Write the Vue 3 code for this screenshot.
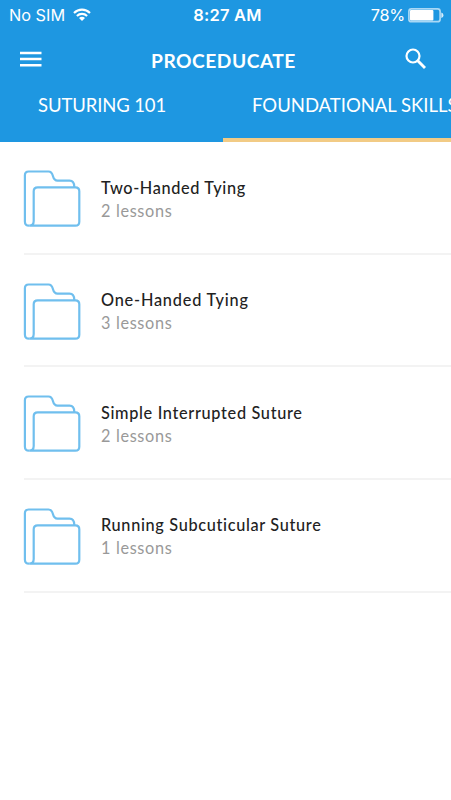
<script setup>
const lessons = [
  { title: 'Two-Handed Tying', count: 2, cls: 'two' },
  { title: 'One-Handed Tying', count: 3, cls: 'one' },
  { title: 'Simple Interrupted Suture', count: 2, cls: 'simple' },
  { title: 'Running Subcuticular Suture', count: 1, cls: 'running' },
]
</script>

<template>
  <div class="screen">
    <header class="header">
      <div class="status">
        <div class="carrier">
          <span>No SIM</span>
          <svg class="wifi" width="18" height="14" viewBox="0 0 18 14" fill="none" stroke="#fff" stroke-width="2.1">
            <path d="M1 5.1C5.6.5 12.4.5 17 5.1" />
            <path d="M3.9 8C6.8 5.1 11.2 5.1 14.1 8" />
            <path d="M6 10.1C7.7 8.4 10.3 8.4 12 10.1L9 13Z" fill="#fff" stroke="none" />
          </svg>
        </div>
        <div class="clock">8:27 AM</div>
        <div class="power">
          <span>78%</span>
          <svg width="36" height="15" viewBox="0 0 36 15">
            <rect x=".9" y=".9" width="31.2" height="12.8" rx="2.5" fill="none" stroke="#a9d8f5" stroke-width="1.7" />
            <rect x="2" y="2" width="23.4" height="10.6" rx="1" fill="#fff" />
            <path d="M33.3 4.5c2.8.8 2.8 4.8 0 5.6z" fill="#d5ecfa" />
          </svg>
        </div>
      </div>
      <div class="toolbar">
        <svg class="menu" width="22" height="16" viewBox="0 0 22 16" fill="#fff">
          <path d="M0 .7h21.5v2.5H0zM0 6.8h21.5v2.5H0zM0 12.9h21.5v2.5H0z" />
        </svg>
        <h1>PROCEDUCATE</h1>
        <svg class="search" width="22" height="22" viewBox="0 0 22 22" fill="none" stroke="#fff">
          <circle cx="8" cy="8" r="6.5" stroke-width="2.2" />
          <path d="M12.8 12.8L20 20" stroke-width="2.9" />
        </svg>
      </div>
      <nav class="tabs">
        <div class="tab first"><span>SUTURING 101</span></div>
        <div class="tab active"><span>FOUNDATIONAL SKILLS</span></div>
      </nav>
    </header>
    <main class="list">
      <div v-for="item in lessons" :key="item.title" class="row">
        <svg class="folder" width="58" height="58" viewBox="0 0 58 58" fill="none" stroke="#70bfee" stroke-width="2.2">
          <path d="M6.2 55.7C3.5 55.7 1.9 54 1.9 51.4V5.2Q1.9 1.5 5.6 1.5H25.5C32 1.5 27.8 10.7 34.5 10.7H46.5Q51.3 10.7 51.3 17.2" />
          <path d="M6.2 55.7C9 55.7 10.7 54 10.7 51V21.3Q10.7 17.3 14.7 17.3H52.3Q56.3 17.3 56.3 21.3V51.7Q56.3 55.7 52.3 55.7Z" />
        </svg>
        <div class="copy">
          <div><span class="title" :class="item.cls">{{ item.title }}</span></div>
          <div class="count">{{ item.count }} lessons</div>
        </div>
      </div>
    </main>
  </div>
</template>

<style>
body { margin: 0; background: #fff; }
</style>
<style scoped>
.screen { width: 451px; height: 800px; overflow: hidden; background: #fff; font-family: Lato, "Liberation Sans", sans-serif; }
.header { height: 142px; background: #1e97e1; color: #fff; overflow: hidden; }
.status { height: 30px; display: grid; grid-template-columns: 1fr auto 1fr; align-items: center; padding: 0 7px 0 9px; box-sizing: border-box; font-family: Inter, sans-serif; font-size: 16.3px; line-height: 30px; }
.carrier { display: flex; align-items: center; gap: 8px; letter-spacing: 0; }
.wifi { margin-top: -1px; }
.clock { font-weight: 600; font-size: 16.5px; letter-spacing: .2px; padding-left: 2px; }
.power { display: flex; justify-content: flex-end; align-items: center; gap: 3px; letter-spacing: -.3px; }
.toolbar { height: 60px; display: flex; align-items: center; justify-content: space-between; padding: 0 24px 0 20px; }
.menu { margin-top: -2px; }
.search { margin-top: -2px; }
h1 { margin: 2px 0 0; font-size: 19.2px; line-height: 24px; font-weight: 700; letter-spacing: .5px; }
.tabs { display: flex; height: 52px; font-size: 18.5px; line-height: 24px; white-space: nowrap; }
.tab { box-sizing: border-box; flex: none; padding-top: 3px; }
.first { width: 223px; padding-left: 38px; letter-spacing: -.12px; }
.active { width: 228px; padding-left: 29px; border-bottom: 4px solid #f2cb85; letter-spacing: 0; }
.list { padding-top: .3px; }
.row { box-sizing: border-box; height: 112.6px; margin-left: 24px; border-bottom: 2px solid #f3f3f3; display: flex; align-items: flex-start; }
.folder { flex: none; margin: 28px 20px 0 -1px; }
.copy { padding-top: 33.4px; font-size: 16.3px; line-height: 23px; white-space: nowrap; }
.title { color: #222; font-weight: 500; letter-spacing: .67px; }
.two { letter-spacing: .64px; }
.one { letter-spacing: .8px; }
.count { color: #999; letter-spacing: .65px; }
</style>
